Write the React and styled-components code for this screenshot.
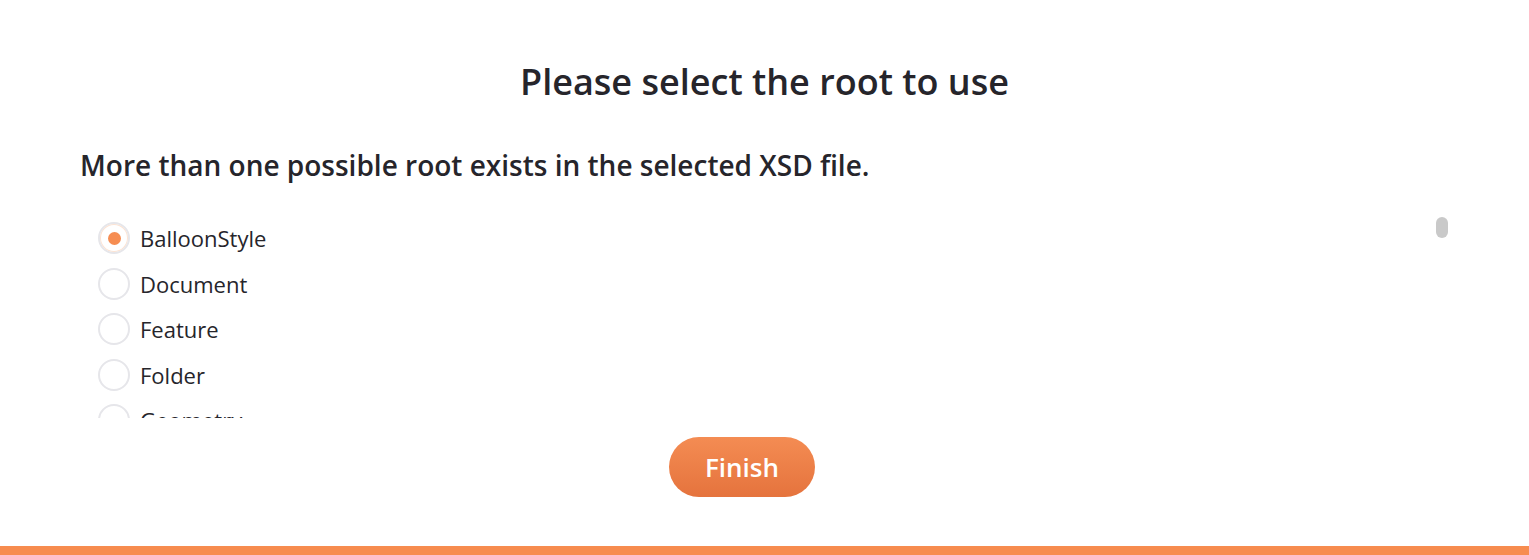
import { useState } from "react";
import styled, { createGlobalStyle } from "styled-components";

const roots = [
  "BalloonStyle", "Document", "Feature", "Folder", "Geometry", "GroundOverlay",
  "IconStyle", "LabelStyle", "LatLonAltBox", "LatLonBox", "LineString",
  "LineStyle", "LinearRing", "Link", "ListStyle", "Location", "Lod", "LookAt",
  "Model", "MultiGeometry", "NetworkLink", "NetworkLinkControl", "Orientation",
  "Pair", "PhotoOverlay", "Placemark", "Point", "PolyStyle", "Polygon",
  "Region", "ResourceMap", "Scale", "Schema", "ScreenOverlay", "Style",
  "StyleMap", "TimeSpan", "TimeStamp", "Update", "ViewVolume", "kml",
];

export default function App() {
  const [selected, setSelected] = useState("BalloonStyle");

  return (
    <>
      <GlobalStyle />
      <Page>
        <Content>
          <Title>Please select the root to use</Title>
          <Subtitle>More than one possible root exists in the selected XSD file.</Subtitle>
          <ListFrame>
            <RootList>
              {roots.map((root) => (
                <RootOption key={root} onClick={() => setSelected(root)}>
                  <Radio $checked={selected === root} />
                  <Label>{root}</Label>
                </RootOption>
              ))}
            </RootList>
            <ScrollThumb />
          </ListFrame>
          <Footer>
            <FinishButton>Finish</FinishButton>
          </Footer>
        </Content>
        <BottomBar />
      </Page>
    </>
  );
}

const GlobalStyle = createGlobalStyle`
  body {
    margin: 0;
    background: #ffffff;
    font-family: "Open Sans", "Noto Sans", sans-serif;
    color: #26252b;
  }
  * { box-sizing: border-box; }
`;

const Page = styled.div`
  width: 1529px;
  height: 555px;
  display: flex;
  flex-direction: column;
  justify-content: space-between;
  background: #ffffff;
`;

const Content = styled.main`
  display: flex;
  flex-direction: column;
  padding: 58px 80px 0;
`;

const Title = styled.h1`
  margin: 0;
  text-align: center;
  font-size: 36px;
  line-height: 48px;
  font-weight: 600;
  color: #26252b;
`;

const Subtitle = styled.h2`
  margin: 40px 0 0;
  font-size: 28px;
  line-height: 38px;
  font-weight: 600;
  color: #26252b;
`;

const ListFrame = styled.div`
  position: relative;
  margin-top: 32px;
  width: 1370px;
  height: 202px;
`;

const RootList = styled.div`
  height: 100%;
  overflow-y: scroll;
  padding: 6px 0 0 18px;
  display: flex;
  flex-direction: column;
  gap: 13.5px;
  scrollbar-width: none;

  &::-webkit-scrollbar {
    display: none;
  }
`;

const ScrollThumb = styled.div`
  position: absolute;
  top: 1px;
  right: 2px;
  width: 12px;
  height: 21px;
  border-radius: 6px;
  background: #c9c9c9;
`;

const RootOption = styled.label`
  display: flex;
  align-items: center;
  gap: 10px;
  cursor: pointer;
  flex-shrink: 0;
`;

const Radio = styled.span`
  width: 32px;
  height: 32px;
  border-radius: 50%;
  border: 2px solid #e6e6ea;
  box-shadow: ${({ $checked }) => ($checked ? "inset 0 0 0 1px #fde3d2" : "none")};
  display: flex;
  align-items: center;
  justify-content: center;
  flex-shrink: 0;

  &::after {
    content: "";
    width: 13px;
    height: 13px;
    border-radius: 50%;
    background: #f68d52;
    display: ${({ $checked }) => ($checked ? "block" : "none")};
  }
`;

const Label = styled.span`
  font-size: 22px;
  line-height: 32px;
  color: #26252b;
`;

const Footer = styled.div`
  display: flex;
  justify-content: center;
  margin-top: 19px;
  padding-right: 45px;
`;

const FinishButton = styled.button`
  width: 146px;
  height: 60px;
  border: none;
  border-radius: 30px;
  background: linear-gradient(180deg, #f48c53 0%, #e5733d 100%);
  color: #ffffff;
  font-family: "Open Sans", "Noto Sans", sans-serif;
  font-size: 26px;
  font-weight: 600;
  cursor: pointer;
`;

const BottomBar = styled.div`
  height: 9px;
  background: #f78c4f;
`;
